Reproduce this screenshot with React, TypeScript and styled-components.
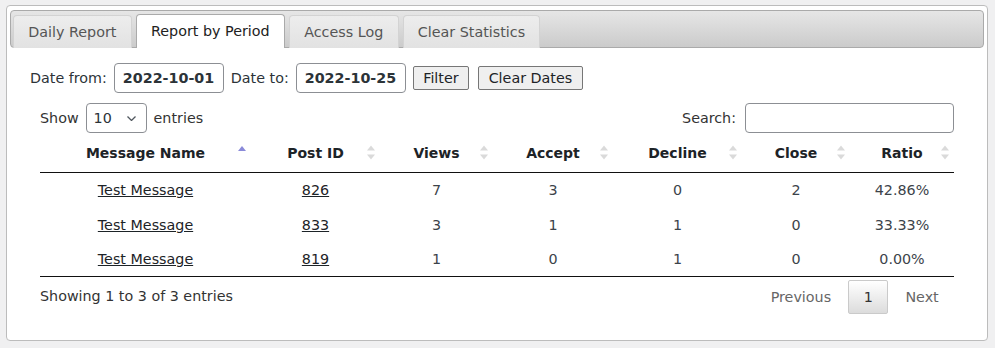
import React from 'react';
import { createGlobalStyle, styled } from 'styled-components';

const GlobalStyle = createGlobalStyle`
body {
  margin: 0;
  padding: 5px 7px 0 6px;
  background: #f0f0f1;
  font-family: 'DejaVu Sans', Verdana, sans-serif;
  font-size: 13px;
  color: #3c434a;
}
`

const Widget = styled.div`
border: 1px solid #bcbcbc;
border-radius: 4px;
background: #fff;
padding: 4px 3px 3px;
`

const TabNav = styled.ul`
display: flex;
align-items: flex-end;
gap: 4px;
margin: 0;
padding: 3px 2px 0;
list-style: none;
border: 1px solid #aaa;
border-radius: 4px;
background: linear-gradient(#e6e6e6, #cbcbcb);
`

const Tab = styled.li<{ $active?: boolean }>`
margin-bottom: -1px;
padding: 7px 14.3px ${p => (p.$active ? '8px' : '7px')};
line-height: 18px;
font-size: 14.3px;
border: 1px solid ${p => (p.$active ? '#aaa' : '#d3d3d3')};
border-bottom: 0;
border-radius: 4px 4px 0 0;
background: ${p => (p.$active ? '#fff' : 'linear-gradient(#ededed, #e2e2e2)')};
color: ${p => (p.$active ? '#212121' : '#555')};
cursor: pointer;
`

const Panel = styled.div`
padding: 15.3px 20px 23px;
font-size: 14.3px;
`

const DateRow = styled.div`
display: flex;
align-items: center;
gap: 7px;
color: #2c3338;
`

const DateInput = styled.input`
box-sizing: border-box;
width: 110px;
height: 30px;
padding: 0 8px;
border: 1px solid #8c8f94;
border-radius: 4px;
font-family: 'DejaVu Sans', sans-serif;
font-size: 14.3px;
font-weight: bold;
color: #2c3338;
`

const Button = styled.button<{ $push?: number }>`
height: 24px;
margin-left: ${p => p.$push || 0}px;
padding: 0 9.5px;
border: 1px solid #767676;
border-radius: 2px;
background: #efefef;
font-family: 'DejaVu Sans', sans-serif;
font-size: 14.3px;
color: #1d2327;
`

const TableWrap = styled.div`
margin: 10px 10px 0;
`

const Controls = styled.div`
display: flex;
justify-content: space-between;
align-items: center;
color: #333;
`

const Field = styled.label`
display: flex;
align-items: center;
gap: 7px;
`

const SelectBox = styled.div`
position: relative;
`

const Select = styled.select`
appearance: none;
box-sizing: border-box;
width: 61px;
height: 30px;
padding: 0 20px 0 7px;
border: 1px solid #8c8f94;
border-radius: 4px;
background: #fff;
font-family: 'DejaVu Sans', sans-serif;
font-size: 14.3px;
color: #2c3338;
`

const Chevron = styled.svg`
position: absolute;
right: 11px;
top: 13px;
pointer-events: none;
`

const SearchInput = styled.input`
box-sizing: border-box;
width: 209px;
height: 30px;
margin-left: 2px;
border: 1px solid #8c8f94;
border-radius: 4px;
`

const Table = styled.table`
width: 100%;
table-layout: fixed;
border-collapse: collapse;
border-bottom: 1px solid #111;
`

const Th = styled.th`
position: relative;
padding: 11px 18px 9px;
line-height: 19px;
font-size: 14px;
font-weight: bold;
color: #1d2327;
text-align: center;
border-bottom: 1px solid #111;
white-space: nowrap;
`

const SortIcon = styled.svg`
position: absolute;
right: 5.5px;
top: 12px;
`

const Td = styled.td`
padding: 8px 10px;
line-height: 18.3px;
font-size: 14.3px;
text-align: center;
color: #3c434a;
`

const Link = styled.a`
color: #1d2327;
text-decoration: underline;
`

const Footer = styled.div`
display: flex;
justify-content: space-between;
align-items: flex-start;
`

const Info = styled.div`
padding-top: 10px;
line-height: 18px;
color: #333;
`

const Pager = styled.div`
display: flex;
padding-top: 3px;
`

const PageButton = styled.span<{ $current?: boolean }>`
box-sizing: border-box;
min-width: 38px;
margin-left: 2px;
padding: 7.15px 14.3px;
line-height: 18px;
text-align: center;
border: 1px solid ${p => (p.$current ? '#cacaca' : 'transparent')};
border-radius: 2px;
background: ${p => (p.$current ? 'linear-gradient(#fff, #dcdcdc)' : 'transparent')};
color: ${p => (p.$current ? '#333' : '#666')};
`

const columns = [
  { name: 'Message Name', width: 211, asc: true },
  { name: 'Post ID', width: 129 },
  { name: 'Views', width: 113 },
  { name: 'Accept', width: 120 },
  { name: 'Decline', width: 129 },
  { name: 'Close', width: 108 },
  { name: 'Ratio', width: 104 },
];

const rows = [
  ['826', 7, 3, 0, 2, '42.86%'],
  ['833', 3, 1, 1, 0, '33.33%'],
  ['819', 1, 0, 1, 0, '0.00%'],
];

const Sort = ({ asc }: { asc?: boolean }) =>
  asc ? (
    <SortIcon width="8" height="15" viewBox="0 0 8 15">
      <path d="M0 6 L4 1 L8 6 Z" fill="#8a8ad9" />
    </SortIcon>
  ) : (
    <SortIcon width="8" height="15" viewBox="0 0 8 15">
      <path d="M0 5.5 L4 0.5 L8 5.5 Z" fill="#dadada" />
      <path d="M0 9.5 L4 14.5 L8 9.5 Z" fill="#dadada" />
    </SortIcon>
  );

export default function App() {
  return (
    <Widget>
      <GlobalStyle />
      <TabNav>
        <Tab>Daily Report</Tab>
        <Tab $active>Report by Period</Tab>
        <Tab>Access Log</Tab>
        <Tab>Clear Statistics</Tab>
      </TabNav>
      <Panel>
        <DateRow>
          <span>Date from:</span>
          <DateInput defaultValue="2022-10-01" />
          <span>Date to:</span>
          <DateInput defaultValue="2022-10-25" />
          <Button>Filter</Button>
          <Button $push={2}>Clear Dates</Button>
        </DateRow>
        <TableWrap>
          <Controls>
            <Field>
              Show
              <SelectBox>
                <Select defaultValue="10">
                  <option>10</option>
                  <option>25</option>
                  <option>50</option>
                  <option>100</option>
                </Select>
                <Chevron width="9" height="5" viewBox="0 0 9 5">
                  <path d="M0.5 0.5 L4.5 4.5 L8.5 0.5" fill="none" stroke="#50575e" strokeWidth="1.3" />
                </Chevron>
              </SelectBox>
              entries
            </Field>
            <Field>
              Search:
              <SearchInput />
            </Field>
          </Controls>
          <Table>
            <colgroup>
              {columns.map(c => <col key={c.name} style={{ width: c.width }} />)}
            </colgroup>
            <thead>
              <tr>
                {columns.map(c => (
                  <Th key={c.name}>
                    {c.name}
                    <Sort asc={c.asc} />
                  </Th>
                ))}
              </tr>
            </thead>
            <tbody>
              {rows.map(([id, views, accept, decline, close, ratio]) => (
                <tr key={id}>
                  <Td><Link href="#">Test Message</Link></Td>
                  <Td><Link href="#">{id}</Link></Td>
                  <Td>{views}</Td>
                  <Td>{accept}</Td>
                  <Td>{decline}</Td>
                  <Td>{close}</Td>
                  <Td>{ratio}</Td>
                </tr>
              ))}
            </tbody>
          </Table>
          <Footer>
            <Info>Showing 1 to 3 of 3 entries</Info>
            <Pager>
              <PageButton>Previous</PageButton>
              <PageButton $current>1</PageButton>
              <PageButton>Next</PageButton>
            </Pager>
          </Footer>
        </TableWrap>
      </Panel>
    </Widget>
  );
}
